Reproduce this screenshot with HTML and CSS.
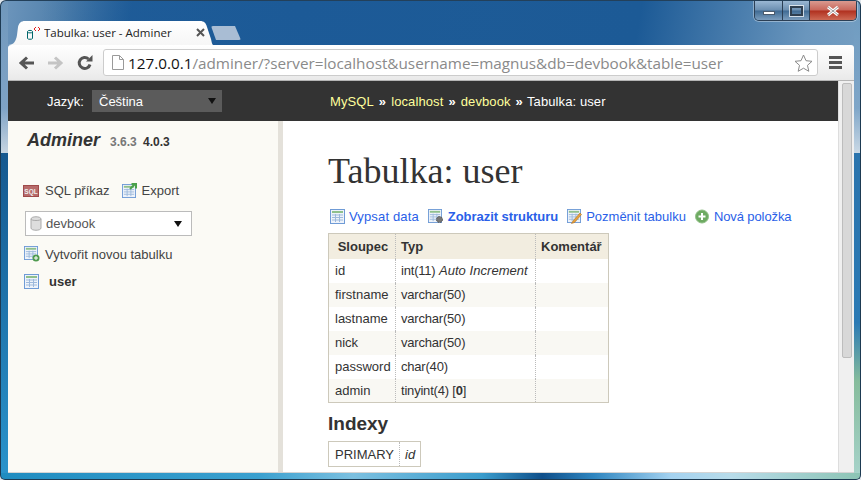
FILE: index.html
```html
<!DOCTYPE html>
<html lang="cs">
<head>
<meta charset="utf-8">
<title>Tabulka: user - Adminer</title>
<link rel="stylesheet" href="styles.css">
</head>
<body>
<svg class="defs" width="0" height="0" aria-hidden="true">
  <defs>
    <symbol id="tbl" viewBox="0 0 15 15">
      <rect x=".5" y=".5" width="14" height="14" fill="#eef3fa" stroke="#6f9bd6"/>
      <rect x="2" y="2" width="11" height="2" fill="#8fc08c"/>
      <path d="M2 6h11M2 8.500h11M2 11h11M5.500 5v8M9.500 5v8" stroke="#9db9dc" fill="none"/>
    </symbol>
  </defs>
</svg>
<div class="titlebar">
  <div class="winctl">
    <span class="wbtn wmin"><i></i></span>
    <span class="wbtn wmax"><i></i></span>
    <span class="wbtn wclose">
      <svg width="18" height="12" viewBox="0 0 18 12"><path d="M4 2l10 8M14 2L4 10" stroke="#fff" stroke-width="3" fill="none"/><path d="M4 2l10 8M14 2L4 10" stroke="#5a5a5a" stroke-width=".6" fill="none"/></svg>
    </span>
  </div>
</div>
<div class="tabstrip">
  <div class="tab">
    <svg class="favicon" width="14" height="14" viewBox="0 0 14 14"><path d="M1.500 5.500c0-1.500 5-1.500 5 0v7c0 1-5 1-5 0zM1.500 6c0 1.200 5 1.200 5 0" fill="none" stroke="#00666b"/><path d="M10 1L8 3l2 2M12 1l2 2-2 2" stroke="#e02020" fill="none"/></svg>
    <span class="tabtitle">Tabulka: user - Adminer</span>
    <svg class="tabx" width="9" height="9" viewBox="0 0 9 9"><path d="M1 1l7 7M8 1L1 8" stroke="#555" stroke-width="2"/></svg>
  </div>
  <div class="newtab"></div>
</div>
<div class="toolbar">
  <svg class="navbtn" width="17" height="16" viewBox="0 0 17 16"><path d="M16 8H4M9 2.500L3 8l6 5.500" fill="none" stroke="#555" stroke-width="3"/></svg>
  <svg class="navbtn fwd" width="17" height="16" viewBox="0 0 17 16"><path d="M1 8h12M8 2.500L14 8l-6 5.500" fill="none" stroke="#c4c4c4" stroke-width="3"/></svg>
  <svg class="navbtn reload" width="16" height="16" viewBox="0 0 16 16"><path d="M13 9.500A5.500 5.500 0 1 1 11.500 4" fill="none" stroke="#555" stroke-width="3"/><path d="M9 6.500h6.500V0z" fill="#555"/></svg>
  <div class="omnibox">
    <svg class="pageicon" width="12" height="15" viewBox="0 0 12 15"><path d="M.5.500h7l4 4v10H.5zM7.500.500v4h4" fill="#fff" stroke="#9a9a9a"/></svg>
    <span class="url"><span class="host">127.0.0.1</span>/adminer/?server=localhost&amp;username=magnus&amp;db=devbook&amp;table=user</span>
    <svg class="star" width="19" height="18" viewBox="0 0 19 18"><path d="M9.500 1l2.500 5.700 6 .6-4.500 4 1.300 6-5.300-3.100-5.300 3.100 1.300-6-4.500-4 6-.6z" fill="#fff" stroke="#8a8a8a"/></svg>
  </div>
  <div class="menu"><i></i><i></i><i></i></div>
</div>
<div class="viewport">
  <div class="page">
    <div class="langbar">
      <span class="langlabel">Jazyk:</span>
      <div class="langsel"><span>Čeština</span><b class="arrow"></b></div>
      <div class="crumbs"><a>MySQL</a><span class="sep">»</span><a>localhost</a><span class="sep">»</span><a>devbook</a><span class="sep last">»</span><span class="cur">Tabulka: user</span></div>
    </div>
    <div class="columns">
      <aside class="side">
        <div class="brand"><strong class="logo">Adminer</strong><span class="ver">3.6.3</span><span class="newver">4.0.3</span></div>
        <div class="sidelinks">
          <svg class="sqlicon" width="16" height="13" viewBox="0 0 16 13"><rect x=".5" y="1.500" width="15" height="11" fill="#b76b6b" stroke="#a04a4a"/><text x="8" y="10" class="sqltext">SQL</text></svg>
          <a class="sqlt">SQL příkaz</a>
          <svg class="exp" width="15" height="15" viewBox="0 0 15 15"><use href="#tbl" y="1" width="14" height="14"/><path d="M8 6l5-5M9.500 1H14v4.500" stroke="#4aa04a" stroke-width="2" fill="none"/></svg>
          <a>Export</a>
        </div>
        <div class="dbsel">
          <svg width="12" height="15" viewBox="0 0 12 15"><path d="M1 3c0-3 10-3 10 0v9c0 3-10 3-10 0z" fill="#ddd" stroke="#aaa"/><path d="M1 3c0 2 10 2 10 0" fill="none" stroke="#aaa"/></svg>
          <span>devbook</span><b class="arrow"></b>
        </div>
        <div class="newtable">
          <svg width="16" height="16" viewBox="0 0 16 16"><use href="#tbl" width="14" height="14"/><circle cx="12" cy="12" r="3.500" fill="#4f9a4f"/><path d="M10 12h4M12 10v4" stroke="#fff"/></svg>
          <a>Vytvořit novou tabulku</a>
        </div>
        <div class="tablerow">
          <svg width="15" height="15"><use href="#tbl" width="15" height="15"/></svg>
          <a class="tname">user</a>
        </div>
      </aside>
      <main class="content">
        <h1>Tabulka: user</h1>
        <div class="actions">
          <a class="a-view"><svg width="15" height="15"><use href="#tbl" width="15" height="15"/></svg>Vypsat data</a>
          <a class="active"><svg width="16" height="15" viewBox="0 0 16 15"><use href="#tbl" width="14" height="14"/><circle cx="11.500" cy="10.500" r="3" fill="#777" stroke="#555" stroke-dasharray="1.500 1"/></svg>Zobrazit strukturu</a>
          <a><svg width="15" height="15" viewBox="0 0 15 15"><use href="#tbl" width="14" height="14"/><path d="M6 12l7-8 1.500 1.500-7 8-3 1z" fill="#e8a33c" stroke="#b07020" stroke-width=".6"/></svg>Pozměnit tabulku</a>
          <a class="a-new"><svg width="15" height="15" viewBox="0 0 15 15"><circle cx="7" cy="7.500" r="6.500" fill="#6eaa62" stroke="#8fbf85"/><path d="M3.500 7.500h7M7 4v7" stroke="#fff" stroke-width="2"/></svg>Nová položka</a>
        </div>
        <table class="cols">
          <thead><tr><th class="c1">Sloupec</th><td class="c2 th">Typ</td><td class="c3 th">Komentář</td></tr></thead>
          <tbody>
            <tr><th>id</th><td>int(11) <i>Auto Increment</i></td><td></td></tr>
            <tr><th>firstname</th><td>varchar(50)</td><td></td></tr>
            <tr><th>lastname</th><td>varchar(50)</td><td></td></tr>
            <tr><th>nick</th><td>varchar(50)</td><td></td></tr>
            <tr><th>password</th><td>char(40)</td><td></td></tr>
            <tr><th>admin</th><td>tinyint(4) [<b>0</b>]</td><td></td></tr>
          </tbody>
        </table>
        <h2>Indexy</h2>
        <table class="idx"><tr><th>PRIMARY</th><td><i>id</i></td></tr></table>
      </main>
    </div>
  </div>
  <div class="scrollbar"><div class="thumb"></div></div>
</div>
</body>
</html>
```
FILE: styles.css
```css
* { box-sizing: border-box; }
html { margin: 0; height: 480px; overflow: hidden; background: #dfe6ec; }
body {
  margin: 0;
  width: 861px;
  height: 480px;
  overflow: hidden;
  display: flex;
  flex-direction: column;
  padding: 0 6px 6px 7px;
  border: 1px solid #1d3a52;
  border-top-color: #23405a;
  border-radius: 6px 6px 5px 5px;
  font: 13px "Liberation Sans", Arial, sans-serif;
  color: #333;
  background:
    linear-gradient(90deg, #1f8cc0 0, #3aa0cf 30%, #7cc0e0 41%, #3a9ccc 56%, #0f4f8a 63%, #2f86c0 69%, #a4d2f0 78%, #b8dcea 85%, #8cc4b4 100%) left bottom / 100% 6px no-repeat,
    linear-gradient(#15588f, #2a94cc) left bottom / 7px 326px no-repeat,
    linear-gradient(#2b74ad 0, #2b7ab4 52%, #86bc9c 70%, #a8d4cc 100%) right bottom / 6px 326px no-repeat,
    linear-gradient(#7098bc, #7fa3c6 70%, #c8d6e2) left top / 7px 153px no-repeat,
    linear-gradient(#6d9abf, #7fa6c8 70%, #ccdae6) right top / 6px 153px no-repeat,
    radial-gradient(260px 170px at 300px 10px, #1c5a97 0, rgba(28,90,151,0) 100%),
    linear-gradient(100deg, #6f97bd 0, #5382ad 6%, #1f5c98 14%, #1c5a96 68%, #6a96bd 86%, #82a9c8 100%);
}
.defs { position: absolute; }
a { color: inherit; }

.titlebar { height: 20px; display: flex; justify-content: flex-end; margin-right: -3px; flex: none; }
.winctl { display: flex; height: 20px; border: 1px solid #2b3f55; border-top: 0; border-radius: 0 0 5px 5px; overflow: hidden; width: 103px; box-shadow: 0 0 0 1px rgba(255,255,255,.35); }
.wbtn { display: flex; align-items: center; justify-content: center; height: 100%; }
.wmin { width: 28px; background: linear-gradient(#9ab7d3, #6b8eb0 48%, #3f6a93 52%, #7b9dbd); border-right: 1px solid #2b3f55; }
.wmin i { width: 12px; height: 4px; margin-top: 5px; background: #fff; border: 1px solid #4a5a6c; }
.wmax { width: 27px; background: linear-gradient(#9ab7d3, #6b8eb0 48%, #3f6a93 52%, #7b9dbd); border-right: 1px solid #2b3f55; }
.wmax i { width: 13px; height: 10px; border: 2px solid #2f3f50; background: transparent; outline: 1px solid rgba(255,255,255,.7); }
.wclose { flex: 1; background: linear-gradient(#d99a90, #c8665a 48%, #b0301f 52%, #cd6a55); }

.tabstrip { height: 24px; display: flex; align-items: flex-start; flex: none; }
.tab {
  width: 206px; height: 24px; flex: none; display: flex; align-items: center; padding: 0 0 1px 18px;
  background: linear-gradient(#fff, #f6f6f6);
  clip-path: path("M0 24 C6 24 8 20 9 14 L10 6 C11 2 13 0 17 0 L192 0 C196 0 198 2 199 6 L203 18 C204 22 204 24 206 24 Z");
}
.favicon { margin-right: 4px; flex: none; }
.tabtitle { font: 11.500px "Open Sans", sans-serif; color: #222; width: 146px; white-space: nowrap; overflow: hidden; }
.tabx { margin-left: 6px; flex: none; }
.newtab { width: 30px; height: 14px; margin: 5px 0 0 -3px; background: #a9bdd4; clip-path: polygon(0 0, 24px 0, 30px 100%, 5px 100%); border-radius: 2px; }

.toolbar { height: 36px; flex: none; display: flex; align-items: center; padding: 0 0 0 10px; background: linear-gradient(#fff, #f3f3f3 60%, #e9e9e9); border-bottom: 1px solid #b5b5b5; border-radius: 3px 3px 0 0; }
.navbtn { flex: none; margin-right: 12px; }
.fwd { margin-right: 13px; }
.reload { margin-right: 10px; }
.omnibox { width: 715px; height: 27px; flex: none; display: flex; align-items: center; padding: 0 4px 0 8px; background: #fff; border: 1px solid #ccc; border-radius: 3px; }
.pageicon { flex: none; margin-right: 4px; }
.url { font: 15.280px "Open Sans", sans-serif; color: #8a8a8a; white-space: nowrap; flex: 1; }
.host { color: #111; }
.star { flex: none; }
.menu { display: flex; flex-direction: column; gap: 2px; margin-left: 11px; }
.menu i { display: block; width: 13px; height: 3px; background: #555; }

.viewport { flex: 1; min-height: 0; display: flex; background: #fff; overflow: hidden; border-bottom: 1px solid #d4d4d4; }
.page { flex: 1; min-width: 0; display: flex; flex-direction: column; }
.scrollbar { width: 16px; flex: none; background: #f0f0f0; border-left: 1px solid #ddd; padding: 2px 2px 0 3px; }
.thumb { height: 275px; background: #d8d8d8; border: 1px solid #bdbdbd; border-radius: 2px; }

.langbar { height: 40px; flex: none; display: flex; align-items: center; background: #333; color: #fff; padding-left: 39px; }
.langlabel { width: 45px; }
.langsel { width: 130px; height: 22px; display: flex; align-items: center; justify-content: space-between; background: #5b5b5b; padding: 0 6px 0 7px; }
.arrow { width: 0; height: 0; border: 4px solid transparent; border-top: 6px solid #111; border-bottom: 0; }
.crumbs { margin-left: 108px; display: flex; align-items: center; white-space: nowrap; letter-spacing: .1px; }
.crumbs a { color: #ffff9c; }
.sep { margin: 0 5px; color: #fff; font-weight: bold; }
.sep.last { margin-right: 4px; }
.cur { color: #fff; }

.columns { flex: 1; min-height: 0; display: flex; }
.side { width: 275px; flex: none; background: #fbfaf5; border-right: 5px solid #e4e1da; padding: 9px 0 0 15px; color: #444; }
.brand { display: flex; align-items: baseline; height: 30px; color: #666; font-size: 12px; }
.logo { font-size: 18px; font-style: italic; color: #333; width: 87px; padding-left: 4px; }
.ver { font-weight: bold; width: 33px; color: #777; }
.newver { font-weight: bold; color: #333; }
.sidelinks { display: flex; align-items: center; margin-top: 22px; height: 16px; }
.sqlicon { margin-right: 6px; }
.sqltext { font: bold 6.500px "Liberation Sans", sans-serif; fill: #eee; text-anchor: middle; }
.sqlt { margin-right: 12px; }
.exp { margin-right: 5px; }
.dbsel { width: 167px; height: 25px; margin: 13px 0 0 2px; display: flex; align-items: center; padding: 0 9px 0 4px; background: #fff; border: 1px solid #bbb; color: #555; }
.dbsel span { margin-left: 4px; flex: 1; }
.newtable { display: flex; align-items: center; margin: 10px 0 0 1px; height: 16px; gap: 5px; }
.tablerow { display: flex; align-items: center; margin: 12px 0 0 1px; height: 15px; }
.tname { font-weight: bold; margin-left: 10px; color: #333; }

.content { flex: 1; min-width: 0; padding: 33px 0 0 45px; }
h1 { margin: 0; font: normal 36px/34px "Liberation Serif", serif; color: #333; }
.actions { display: flex; align-items: center; margin-top: 20px; height: 16px; color: #2a5fe8; white-space: nowrap; padding-left: 2px; }
.actions a { display: flex; align-items: center; gap: 4px; margin-right: 9px; }
.actions .a-view { letter-spacing: .15px; }
.actions .active { font-weight: bold; letter-spacing: -.05px; }
.actions .a-new { letter-spacing: -.1px; }
table { border-collapse: collapse; border: 1px solid #cdc9bb; }
.cols { margin-top: 9px; width: 281px; table-layout: fixed; }
th, td { height: 24px; padding: 0 5px 0 6px; text-align: left; font-weight: normal; border-left: 1px dotted #bbb; white-space: nowrap; }
td { padding-left: 5px; }
th { border-left: 0; }
.cols td { letter-spacing: -.2px; }
.cols td i { letter-spacing: .05px; }
.cols thead th, .cols thead td { height: 25px; background: #f2ede0; font-weight: bold; letter-spacing: 0; }
.cols thead th { text-align: center; padding-left: 7px; }
.c1 { width: 67px; }
.c2 { width: 140px; }
.cols tbody tr:nth-child(even) { background: #f9f8f3; }
h2 { margin: 11px 0 7px; font: bold 19px/20px "Liberation Sans", sans-serif; color: #333; }
.idx { height: 26px; }
.idx th, .idx td { height: 24px; }
```
